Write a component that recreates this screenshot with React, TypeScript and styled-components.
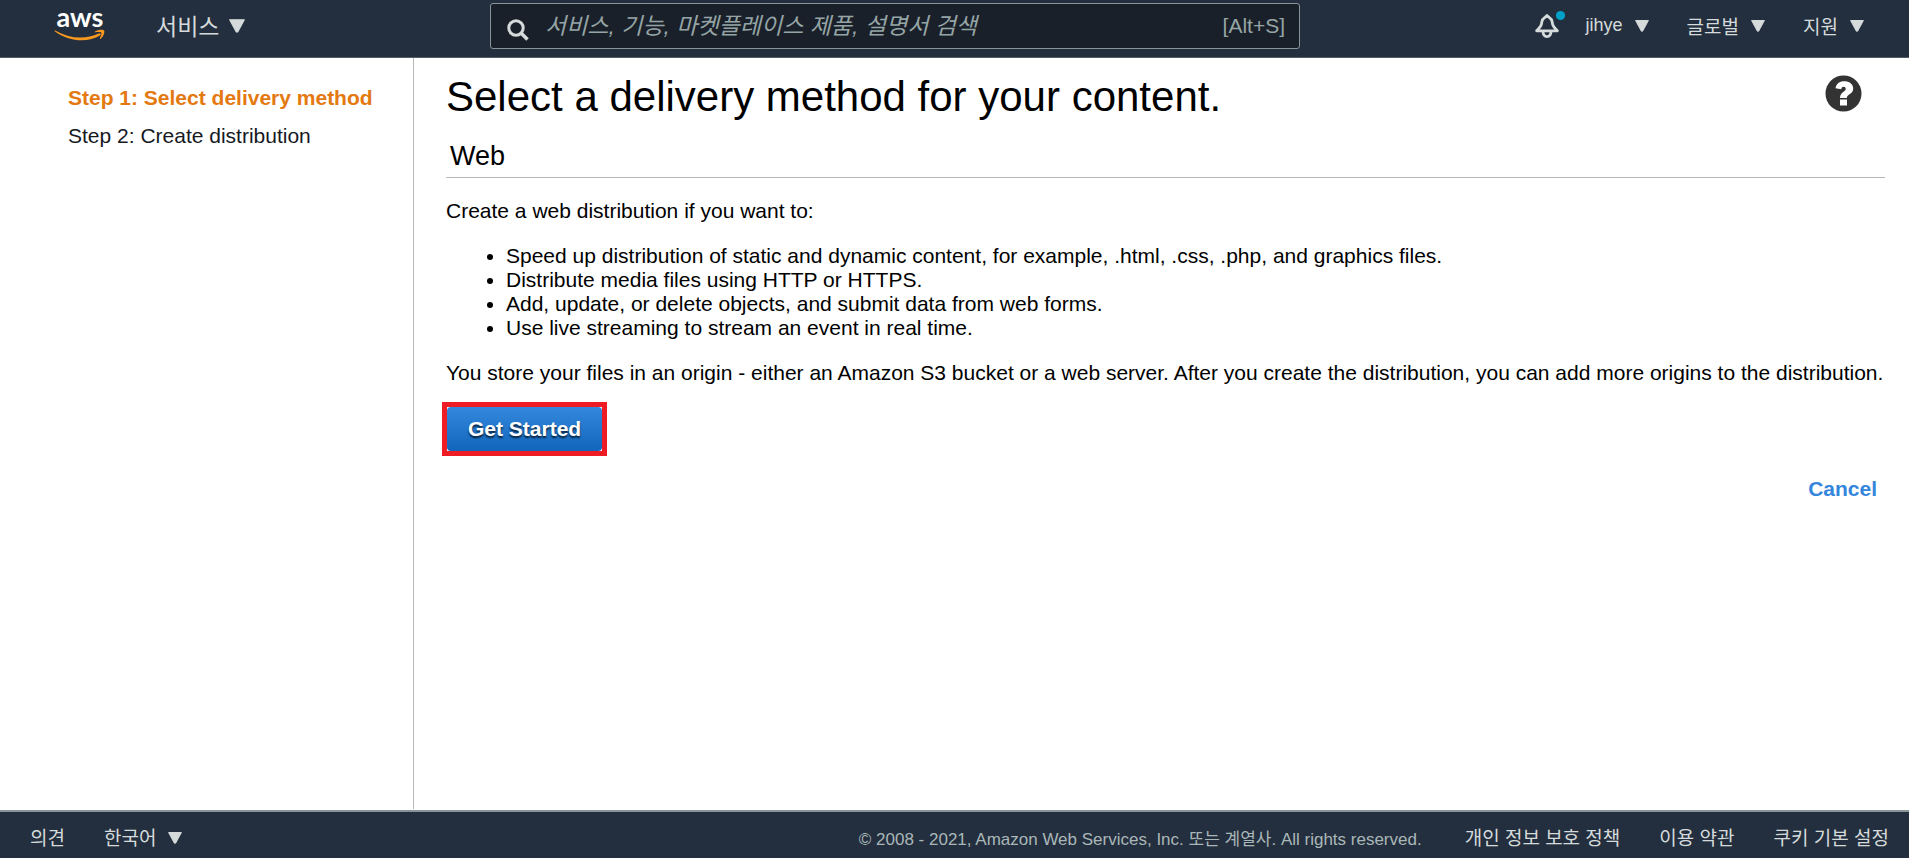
import React from 'react';
import styled, { createGlobalStyle, css } from 'styled-components';

const latin = '"Liberation Sans", Arial';
const korean = '"Noto Sans CJK KR", "Malgun Gothic"';

const GlobalStyle = createGlobalStyle`
  *, *::before, *::after { box-sizing: border-box; }
  body {
    margin: 0;
    background: #fff;
    color: #000;
    font-family: ${latin}, ${korean}, sans-serif;
    font-size: 21px;
    line-height: 24px;
  }
  button, input { font-family: inherit; }
`;

const Page = styled.div`
  display: flex;
  flex-direction: column;
  min-height: 100vh;
`;

const TopBar = styled.header`
  display: flex;
  align-items: flex-start;
  height: 58px;
  padding: 0 45px 0 54px;
  background: #232f3e;
  border-bottom: 1px solid #545b64;
`;

const LogoLink = styled.a`
  display: block;
  width: 52px;
  height: 44px;
  flex: none;
`;

const barItem = css`
  display: inline-flex;
  align-items: center;
  flex: none;
  padding: 0;
  border: 0;
  background: none;
  color: #d5dbdb;
  text-decoration: none;
  white-space: nowrap;
  cursor: pointer;
`;

const MenuButton = styled.button<{ $size?: number }>`
  ${barItem}
  gap: 12px;
  height: 50px;
  font-size: ${(p) => p.$size ?? 19}px;
`;

const Services = styled.div`
  flex: 0 0 384px;
  padding-left: 50px;
  ${MenuButton} { gap: 10px; }
`;

const SearchBox = styled.label`
  display: flex;
  align-items: center;
  flex: 0 1 810px;
  height: 46px;
  margin-top: 3px;
  padding: 0 14px 0 16px;
  gap: 16px;
  background: #1a2029;
  border: 1px solid #879596;
  border-radius: 3px;
`;

const SearchInput = styled.input`
  flex: 1;
  min-width: 0;
  height: 40px;
  padding: 0;
  border: 0;
  outline: 0;
  background: none;
  color: #d5dbdb;
  font-size: 23px;
  font-style: italic;
  &::placeholder { color: #95a5a6; opacity: 1; }
`;

const Shortcut = styled.span`
  color: #95a5a6;
`;

const Account = styled.nav`
  display: flex;
  flex: 1 1 0;
  justify-content: flex-end;
  gap: 38px;
`;

const UserGroup = styled.div`
  display: flex;
  gap: 20px;
`;

const BellButton = styled.button`
  ${barItem}
  height: 50px;
`;

const Body = styled.div`
  display: flex;
  flex: 1;
  margin-bottom: 1px;
`;

const Sidebar = styled.nav`
  flex: 0 0 414px;
  padding: 28px 32px 0 68px;
  border-right: 1px solid #b7b7b7;
`;

const Steps = styled.ol`
  display: flex;
  flex-direction: column;
  gap: 14px;
  margin: 0;
  padding: 0;
  list-style: none;
`;

const Step = styled.li<{ $current?: boolean }>`
  color: ${(p) => (p.$current ? '#e47911' : '#16191f')};
  font-weight: ${(p) => (p.$current ? 700 : 400)};
  white-space: nowrap;
`;

const Main = styled.main`
  flex: 1;
  min-width: 0;
  padding: 15px 24px 0 32px;
`;

const TitleRow = styled.div`
  display: flex;
  justify-content: space-between;
  align-items: flex-start;
  padding-right: 23px;
`;

const Title = styled.h1`
  margin: 0;
  font-size: 42px;
  line-height: 48px;
  font-weight: 400;
`;

const HelpButton = styled.button`
  display: flex;
  padding: 2px 0 0;
  border: 0;
  background: none;
  cursor: pointer;
`;

const SectionTitle = styled.h2`
  margin: 19px 0 0;
  padding: 0 4px 5px;
  border-bottom: 1px solid #b7b7b7;
  font-size: 27px;
  line-height: 32px;
  font-weight: 400;
`;

const Paragraph = styled.p`
  margin: 21px 0;
`;

const Bullets = styled.ul`
  margin: 21px 0;
  padding-left: 60px;
`;

const Highlight = styled.div`
  width: fit-content;
  margin: -4px 0 0 -4px;
  border: 5px solid #ee1c25;
`;

const PrimaryButton = styled.button`
  display: block;
  height: 44px;
  padding: 0 21px;
  border: 0;
  border-radius: 4px;
  background: linear-gradient(#3488de, #1166bb);
  color: #fff;
  font-size: 21px;
  font-weight: 700;
  text-shadow: 0 2px 2px rgba(0, 0, 0, 0.75);
  cursor: pointer;
`;

const Actions = styled.div`
  display: flex;
  justify-content: flex-end;
  margin-top: 21px;
  padding-right: 8px;
`;

const CancelLink = styled.a`
  color: #3486dc;
  font-weight: 700;
  text-decoration: none;
`;

const Footer = styled.footer`
  display: flex;
  justify-content: space-between;
  align-items: baseline;
  height: 48px;
  padding: 11px 20px 0 30px;
  background: #232f3e;
  border-top: 2px solid #879596;
`;

const FooterGroup = styled.div`
  display: flex;
  align-items: baseline;
  gap: 39px;
`;

const FooterLink = styled.a`
  ${barItem}
  font-size: 19px;
`;

const FooterMenu = styled.button`
  ${barItem}
  gap: 12px;
  font-size: 19px;
`;

const Copyright = styled.small`
  margin-right: 4px;
  color: #aab7b8;
  font-size: 17px;
  white-space: nowrap;
`;

const CaretIcon = styled.svg`
  display: block;
  margin-top: 2px;
`;

const Caret = ({ size = 14 }: { size?: number }) => (
  <CaretIcon width={size} height={size - 2} viewBox="0 0 14 12" aria-hidden="true">
    <path d="M.6.5h12.8L7.6 11.2H6.4z" fill="#d5dbdb" stroke="#d5dbdb" strokeLinejoin="round" />
  </CaretIcon>
);

const AwsLogo = () => (
  <svg width="52" height="44" viewBox="0 0 52 44" role="img" aria-label="AWS">
    <text x="26" y="27" textAnchor="middle" fill="#fff" fontFamily="Lato, sans-serif" fontSize="27" fontWeight="700">
      aws
    </text>
    <path d="M1.2 30.4c14 8.400 30 9.200 43.600 3.100 1.500-.6 2.600.9 1.200 2C34 43 14 41.500 1 31.400c-.6-.6-.3-1.300.2-1z" fill="#f7981f" />
    <path d="M40.800 31.700c3.600-2.600 8.800-2 9.300-1.300.8 1.100-.1 5.500-3.400 8.300-.6.500-1.100.2-.8-.5 1-2.200 1.900-4.800 1.400-5.500-.6-.8-3.300-.7-6-.4-.7.100-.9-.3-.5-.6z" fill="#f7981f" />
  </svg>
);

const SearchGlyph = styled.svg`
  flex: none;
  margin-top: 8px;
`;

const SearchIcon = () => (
  <SearchGlyph width="22" height="22" viewBox="0 0 22 22" aria-hidden="true">
    <circle cx="9" cy="9" r="7.200" fill="none" stroke="#d5dbdb" strokeWidth="3" />
    <path d="M14 14l6.500 6.500" stroke="#d5dbdb" strokeWidth="3.600" />
  </SearchGlyph>
);

const BellIcon = () => (
  <svg width="32" height="30" viewBox="0 0 32 30" aria-hidden="true">
    <g fill="none" stroke="#d5dbdb" strokeWidth="2.800" strokeLinejoin="round">
      <path d="M13 5.500c-1 1.800-4.600 2.400-5.100 6.100-.5 4.500-1.800 5.600-5.300 9.200h20.800c-3.500-3.600-4.800-4.700-5.300-9.200-.5-3.700-4.100-4.300-5.100-6.100z" />
      <path d="M9 21.500c.2 6.800 7.800 6.800 8 0" />
    </g>
    <circle cx="26.500" cy="5.500" r="4.600" fill="#00a1c9" />
  </svg>
);

const HelpIcon = () => (
  <svg width="37" height="37" viewBox="0 0 37 37" aria-hidden="true">
    <circle cx="18.500" cy="18.500" r="18" fill="#333" />
    <path d="M10.500 13.200C11.400 8.500 14.500 6.200 19 6.200c5.300 0 9.200 2.700 9.200 7.300 0 6-6.400 5.600-6.400 9.400h-6.800c0-6.200 5.700-5.900 5.700-9 0-1.400-.8-2.100-2-2.100-1.400 0-2.100.8-2.400 2.400z" fill="#fff" />
    <rect x="15" y="24.500" width="7" height="6" fill="#fff" />
  </svg>
);

const bullets = [
  'Speed up distribution of static and dynamic content, for example, .html, .css, .php, and graphics files.',
  'Distribute media files using HTTP or HTTPS.',
  'Add, update, or delete objects, and submit data from web forms.',
  'Use live streaming to stream an event in real time.',
];

export default function App() {
  return (
    <Page>
      <GlobalStyle />
      <TopBar>
        <LogoLink href="#home"><AwsLogo /></LogoLink>
        <Services>
          <MenuButton $size={23}>서비스<Caret size={16} /></MenuButton>
        </Services>
        <SearchBox>
          <SearchIcon />
          <SearchInput type="text" aria-label="검색" placeholder="서비스, 기능, 마켓플레이스 제품, 설명서 검색" />
          <Shortcut>[Alt+S]</Shortcut>
        </SearchBox>
        <Account>
          <UserGroup>
            <BellButton aria-label="알림"><BellIcon /></BellButton>
            <MenuButton $size={18}>jihye<Caret /></MenuButton>
          </UserGroup>
          <MenuButton>글로벌<Caret /></MenuButton>
          <MenuButton>지원<Caret /></MenuButton>
        </Account>
      </TopBar>
      <Body>
        <Sidebar>
          <Steps>
            <Step $current aria-current="step">Step 1: Select delivery method</Step>
            <Step>Step 2: Create distribution</Step>
          </Steps>
        </Sidebar>
        <Main>
          <TitleRow>
            <Title>Select a delivery method for your content.</Title>
            <HelpButton aria-label="Help"><HelpIcon /></HelpButton>
          </TitleRow>
          <SectionTitle>Web</SectionTitle>
          <Paragraph>Create a web distribution if you want to:</Paragraph>
          <Bullets>
            {bullets.map((text) => <li key={text}>{text}</li>)}
          </Bullets>
          <Paragraph>
            You store your files in an origin - either an Amazon S3 bucket or a web server. After you create the
            distribution, you can add more origins to the distribution.
          </Paragraph>
          <Highlight><PrimaryButton>Get Started</PrimaryButton></Highlight>
          <Actions><CancelLink href="#cancel">Cancel</CancelLink></Actions>
        </Main>
      </Body>
      <Footer>
        <FooterGroup>
          <FooterLink href="#feedback">의견</FooterLink>
          <FooterMenu>한국어<Caret /></FooterMenu>
        </FooterGroup>
        <FooterGroup>
          <Copyright>© 2008 - 2021, Amazon Web Services, Inc. 또는 계열사. All rights reserved.</Copyright>
          <FooterLink href="#privacy">개인 정보 보호 정책</FooterLink>
          <FooterLink href="#terms">이용 약관</FooterLink>
          <FooterLink href="#cookies">쿠키 기본 설정</FooterLink>
        </FooterGroup>
      </Footer>
    </Page>
  );
}
